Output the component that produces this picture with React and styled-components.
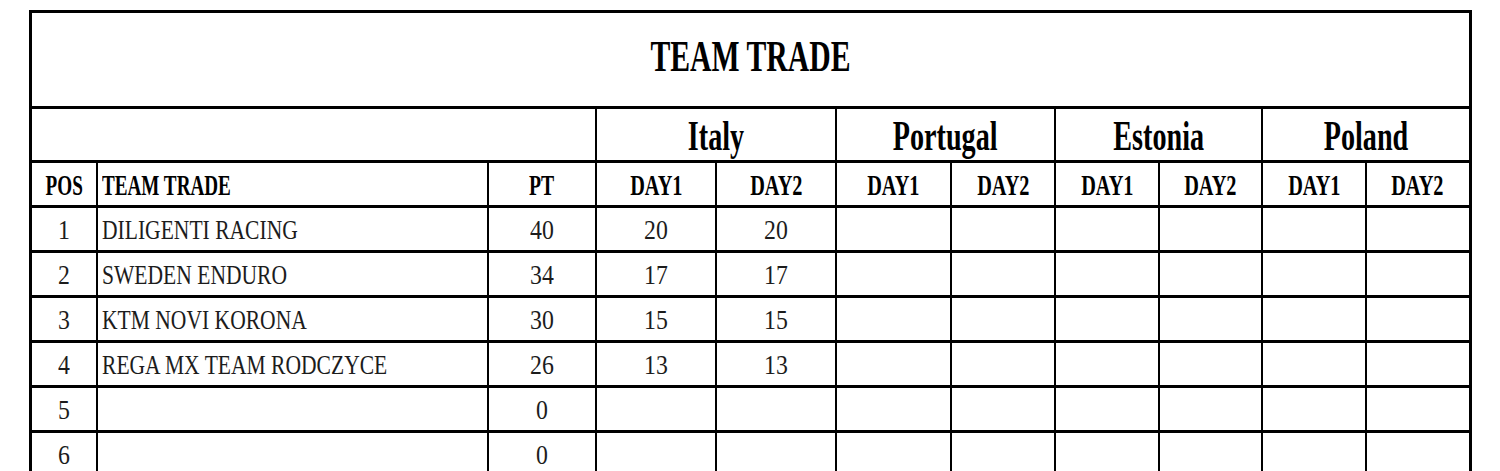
import React from 'react';
import styled, { createGlobalStyle } from 'styled-components';

const GlobalStyle = createGlobalStyle`
    html, body {
        margin: 0;
        background: #fff;
        overflow: hidden;
    }
    body {
        font-family: "Liberation Serif", "Times New Roman", serif;
        color: #000;
    }
`;

const Sheet = styled.table`
    margin: 10px 0 0 29px;
    width: 1442.5px;
    table-layout: fixed;
    border-collapse: collapse;
    border: 3px solid #000;
`;

const Row = styled.tr`
    height: ${(p) => p.$h}px;
`;

// $shift pushes the text down (positive) or up (negative) inside the cell
const Cell = styled.td`
    padding: ${(p) => (p.$shift > 0 ? p.$shift : 0)}px 4px ${(p) => (p.$shift < 0 ? -p.$shift : 0)}px;
    border-left: 2px solid #000;
    border-right: 2px solid #000;
    border-top: 3px solid #000;
    border-bottom: 3px solid #000;
    text-align: ${(p) => p.$align || 'center'};
    vertical-align: middle;
    white-space: nowrap;
    overflow: hidden;
    line-height: 1;
    font-size: ${(p) => p.$size || 28}px;
    font-weight: ${(p) => (p.$bold ? 700 : 400)};
    color: ${(p) => (p.$bold ? '#000' : '#1c1c1c')};
`;

// the sheet uses a condensed serif, so squeeze the text sideways
const Squeeze = styled.span`
    display: inline-block;
    transform: scaleX(${(p) => p.$x || 0.78});
    transform-origin: ${(p) => (p.$left ? 'left center' : 'center')};
`;

const widths = [66.5, 391, 108, 120, 120, 115, 104, 104, 103, 104, 104];
const countries = ['Italy', 'Portugal', 'Estonia', 'Poland'];

const teams = [
    { pos: 1, name: 'DILIGENTI RACING', pt: 40, days: [20, 20] },
    { pos: 2, name: 'SWEDEN ENDURO', pt: 34, days: [17, 17] },
    { pos: 3, name: 'KTM NOVI KORONA', pt: 30, days: [15, 15] },
    { pos: 4, name: 'REGA MX TEAM RODCZYCE', pt: 26, days: [13, 13] },
    { pos: 5, name: '', pt: 0, days: [] },
    { pos: 6, name: '', pt: 0, days: [] },
];

export default function App() {
    return (
        <>
            <GlobalStyle />
            <Sheet>
                <colgroup>
                    {widths.map((w, i) => <col key={i} style={{ width: w }} />)}
                </colgroup>
                <tbody>
                    <Row $h={96}>
                        <Cell colSpan={11} $bold $size={45} $shift={-6}>
                            <Squeeze $x={0.66}>TEAM TRADE</Squeeze>
                        </Cell>
                    </Row>
                    <Row $h={54}>
                        <Cell colSpan={3} />
                        {countries.map((c) => (
                            <Cell key={c} colSpan={2} $bold $size={42} $shift={2}>
                                <Squeeze $x={0.67}>{c}</Squeeze>
                            </Cell>
                        ))}
                    </Row>
                    <Row $h={45}>
                        <Cell $bold $size={29} $shift={2}><Squeeze $x={0.66}>POS</Squeeze></Cell>
                        <Cell $bold $size={29} $shift={2} $align="left"><Squeeze $x={0.66} $left>TEAM TRADE</Squeeze></Cell>
                        <Cell $bold $size={29} $shift={2}><Squeeze $x={0.68}>PT</Squeeze></Cell>
                        {countries.map((c) => (
                            <React.Fragment key={c}>
                                <Cell $bold $size={29} $shift={2}><Squeeze $x={0.7}>DAY1</Squeeze></Cell>
                                <Cell $bold $size={29} $shift={2}><Squeeze $x={0.7}>DAY2</Squeeze></Cell>
                            </React.Fragment>
                        ))}
                    </Row>
                    {teams.map((t) => (
                        <Row key={t.pos} $h={45}>
                            <Cell $shift={2}><Squeeze $x={0.85}>{t.pos}</Squeeze></Cell>
                            <Cell $shift={2} $align="left"><Squeeze $x={0.77} $left>{t.name}</Squeeze></Cell>
                            <Cell $shift={2}><Squeeze $x={0.85}>{t.pt}</Squeeze></Cell>
                            {Array.from({ length: 8 }).map((_, i) => (
                                <Cell key={i} $shift={2}>
                                    {t.days[i] !== undefined && <Squeeze $x={0.85}>{t.days[i]}</Squeeze>}
                                </Cell>
                            ))}
                        </Row>
                    ))}
                </tbody>
            </Sheet>
        </>
    );
}
